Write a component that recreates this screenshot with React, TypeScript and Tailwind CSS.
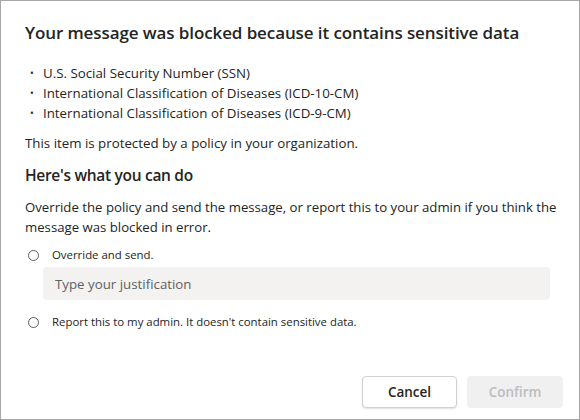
import { useState } from 'react';

const DETECTED = [
  'U.S. Social Security Number (SSN)',
  'International Classification of Diseases (ICD-10-CM)',
  'International Classification of Diseases (ICD-9-CM)',
];

function Radio({ checked, label, onClick }: { checked: boolean; label: string; onClick: () => void }) {
  return (
    <button type="button" onClick={onClick} className="flex items-center gap-[13px] pl-[27px] text-left">
      <span className="w-[11px] h-[11px] rounded-full border border-[#605e5c] flex items-center justify-center bg-white">
        {checked && <span className="w-[5px] h-[5px] rounded-full bg-[#242424]" />}
      </span>
      <span className="text-[11.4px] leading-[16px] text-[#242424]">{label}</span>
    </button>
  );
}

export default function App() {
  const [choice, setChoice] = useState<'override' | 'report' | null>(null);
  const [reason, setReason] = useState('');

  return (
    <div
      className="w-[580px] h-[420px] bg-white border border-[#a6a6a6] flex flex-col text-[#242424]"
      style={{ fontFamily: '"Open Sans", "Noto Sans", sans-serif' }}
    >
      <div className="flex-1 flex flex-col pl-[24px] pr-[14px]">
        <h1 className="mt-[19px] text-[17px] leading-[26px] font-semibold tracking-[-0.1px]">
          Your message was blocked because it contains sensitive data
        </h1>

        <ul className="mt-[17px] text-[13.3px] leading-[20px]">
          {DETECTED.map((item) => (
            <li key={item} className="flex items-center">
              <span className="w-[18px] pl-[5px] text-[10px]">•</span>
              {item}
            </li>
          ))}
        </ul>

        <p className="mt-[10px] text-[13.3px] leading-[20px]">This item is protected by a policy in your organization.</p>

        <h2 className="mt-[10px] text-[15.5px] leading-[24px] font-semibold tracking-[-0.3px]">Here's what you can do</h2>

        <p className="mt-[10px] text-[13.2px] leading-[20px]">
          Override the policy and send the message, or report this to your admin if you think the message was blocked
          in error.
        </p>

        <div className="mt-[10px] -ml-[24px]">
          <Radio checked={choice === 'override'} label="Override and send." onClick={() => setChoice('override')} />
        </div>

        <input
          value={reason}
          onChange={(e) => setReason(e.target.value)}
          placeholder="Type your justification"
          className="mt-[4px] ml-[18px] mr-[15px] h-[33px] rounded-[4px] bg-[#f3f2f1] px-[12px] text-[13.3px] text-[#242424] placeholder:text-[#616161] outline-none"
        />

        <div className="mt-[14px] -ml-[24px]">
          <Radio
            checked={choice === 'report'}
            label="Report this to my admin. It doesn't contain sensitive data."
            onClick={() => setChoice('report')}
          />
        </div>
      </div>

      <div className="flex justify-end gap-[10px] pr-[16px] pb-[11px]">
        <button
          type="button"
          className="w-[95px] h-[32px] rounded-[4px] border border-[#d1d1d1] bg-white text-[13.5px] font-semibold text-[#242424] shadow-[0_1px_2px_rgba(0,0,0,0.12)]"
        >
          Cancel
        </button>
        <button
          type="button"
          disabled={choice === null}
          className="w-[96px] h-[32px] rounded-[4px] bg-[#f0f0f0] text-[13.5px] font-semibold text-[#bdbdbd]"
        >
          Confirm
        </button>
      </div>
    </div>
  );
}
